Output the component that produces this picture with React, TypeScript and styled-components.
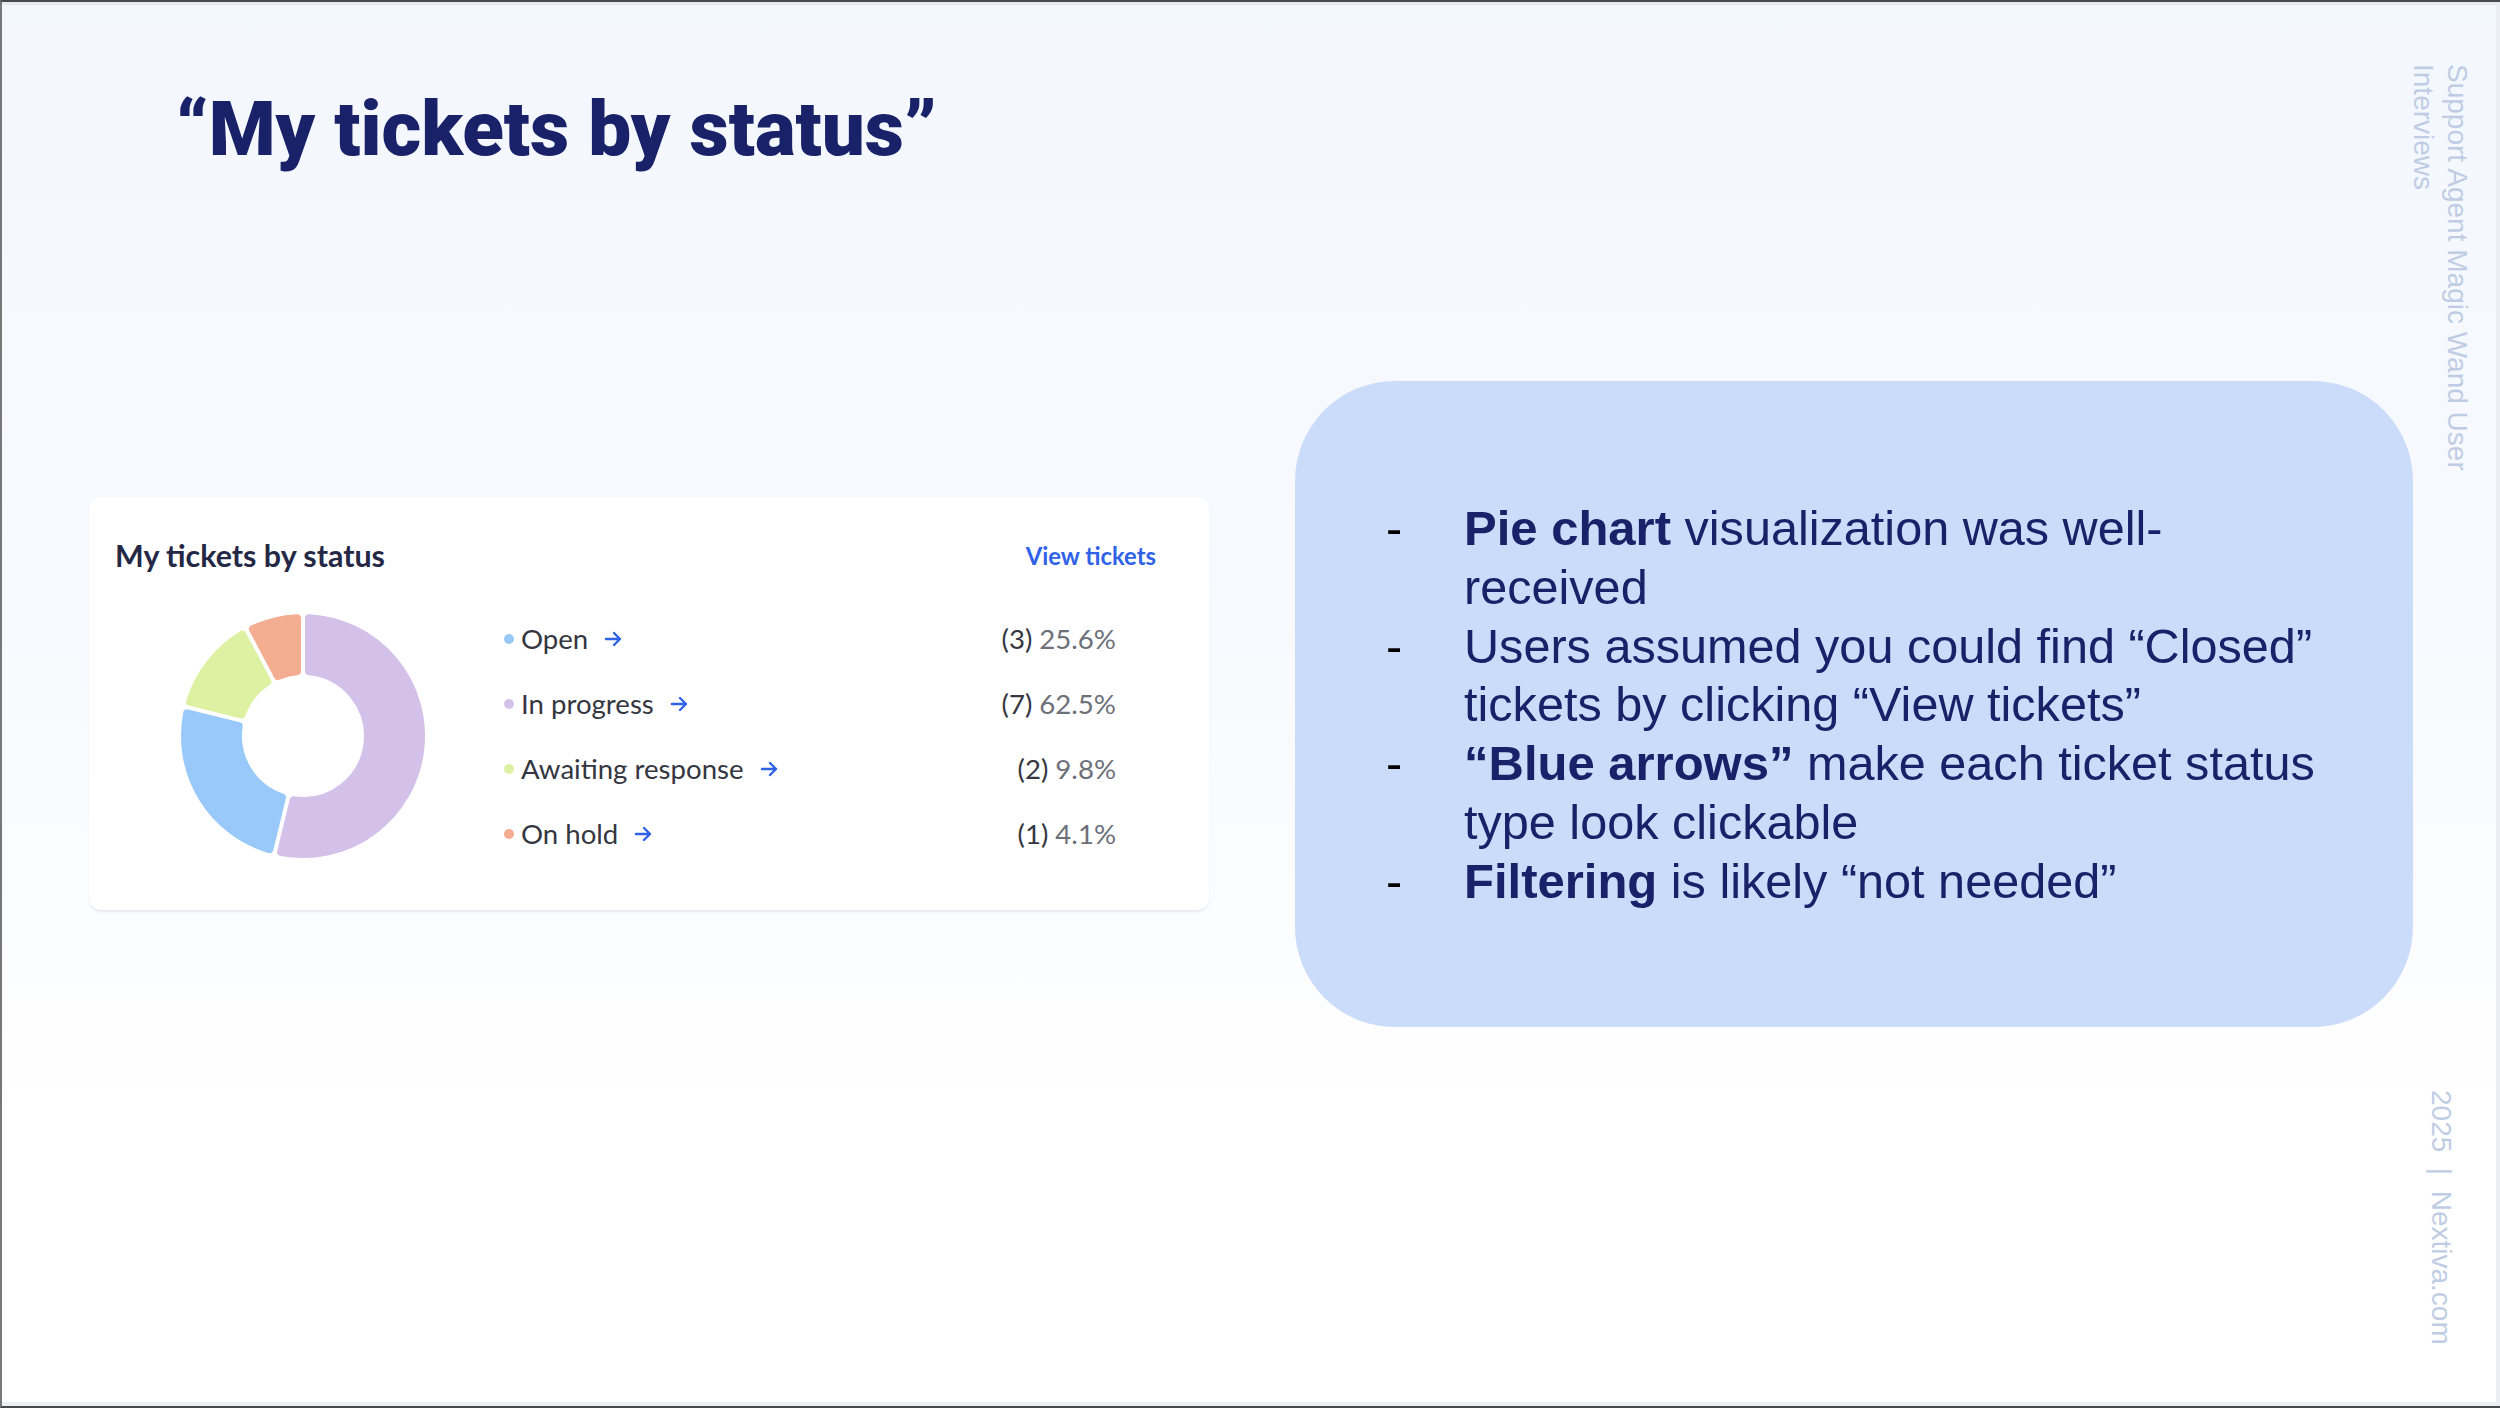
import React from "react";
import styled, { createGlobalStyle } from "styled-components";

const GlobalStyle = createGlobalStyle`
  html, body { margin: 0; padding: 0; background: #fff; }
`;

const Slide = styled.div`
  box-sizing: border-box;
  width: 2500px;
  height: 1408px;
  display: flex;
  overflow: hidden;
  background: linear-gradient(180deg, #f3f7fe 0%, #f9fafe 50%, #ffffff 80%);
  border-top: 2px solid #4a4a4c;
  border-left: 2px solid #77777a;
  border-bottom: 2px solid #4a4a4c;
  box-shadow: inset 0 3px 0 #e8ebf2, inset -4px 0 0 #eceef3, inset 0 -4px 0 #eceef3;
`;

const Main = styled.main`
  flex: 1;
  min-width: 0;
  display: flex;
  flex-direction: column;
`;

const Title = styled.h1`
  margin: 79px 0 0 174px;
  font: 900 76.4px/96px Roboto, sans-serif;
  color: #192168;
`;

const Columns = styled.div`
  display: flex;
  align-items: flex-start;
  gap: 86px;
  margin: 204px 0 0 87px;
`;

const Card = styled.section`
  flex: none;
  box-sizing: border-box;
  width: 1120px;
  height: 413px;
  margin-top: 116px;
  padding: 40px 53px 0 26px;
  background: #fff;
  border-radius: 12px;
  box-shadow: 0 2px 2px #e9ebf1;
  font-family: Lato, sans-serif;
`;

const CardHead = styled.div`
  display: flex;
  justify-content: space-between;
  align-items: center;
  height: 36px;
`;

const CardTitle = styled.h2`
  margin: 0;
  font-size: 30.4px;
  font-weight: 700;
  color: #242845;
`;

const ViewLink = styled.a`
  padding-top: 2px;
  font-size: 23.8px;
  font-weight: 700;
  color: #2f62e6;
`;

const CardBody = styled.div`
  display: flex;
  align-items: center;
  margin-top: 33px;
`;

const Donut = styled.svg`
  flex: none;
  width: 260px;
  height: 260px;
  margin-left: 58px;
`;

const Legend = styled.ul`
  flex: 1;
  margin: 0 0 0 71px;
  padding: 0 40px 0 0;
  list-style: none;
`;

const LegendRow = styled.li`
  display: flex;
  align-items: center;
  justify-content: space-between;
  height: 65.1px;
  font-size: 27.6px;
  color: #34373f;
`;

const LegendLabel = styled.span`
  display: flex;
  align-items: center;
`;

const Dot = styled.i<{ $color: string }>`
  width: 10px;
  height: 10px;
  margin-right: 7px;
  border-radius: 50%;
  background: ${(p) => p.$color};
`;

const Arrow = styled.svg`
  width: 20px;
  height: 20px;
  margin-left: 15px;
  fill: none;
  stroke: #2f62e6;
  stroke-width: 2.4;
  stroke-linecap: round;
  stroke-linejoin: round;
`;

const Percent = styled.span`
  color: #6d7079;
`;

const Panel = styled.section`
  flex: none;
  box-sizing: border-box;
  width: 1118px;
  height: 646px;
  padding: 118px 84px 0 91px;
  background: #cbdcfa;
  border-radius: 100px;
  font: 400 48.6px/58.8px "Liberation Sans", Arial, sans-serif;
  color: #192168;
  b {
    font-size: 49px;
  }
`;

const Notes = styled.ul`
  margin: 0;
  padding: 0;
  list-style: none;
`;

const Note = styled.li`
  position: relative;
  padding-left: 78px;
  &::before {
    content: "-";
    position: absolute;
    left: 0;
    color: #000;
  }
`;

const Rail = styled.aside`
  flex: none;
  width: 85px;
  display: flex;
  flex-direction: column;
  justify-content: space-between;
  padding: 62px 0 61px;
  box-sizing: border-box;
  font: 400 28px/34px "Liberation Sans", Arial, sans-serif;
  color: #bfcde4;
`;

const RailTop = styled.div`
  writing-mode: vertical-rl;
  align-self: flex-start;
  height: 412px;
  margin-left: -9px;
`;

const RailBottom = styled.div`
  writing-mode: vertical-rl;
  align-self: flex-start;
  white-space: pre;
  margin-left: 9px;
`;

// clockwise degrees from twelve o'clock, taken from the reference picture
const segments = [
  { from: 0, to: 193.6, color: "#d3c1ea" },
  { from: 193.6, to: 284, color: "#99c9fa" },
  { from: 284, to: 332, color: "#dcf1a2" },
  { from: 332, to: 360, color: "#f4ad90" },
];

const legend = [
  { label: "Open", count: "(3)", pct: "25.6%", color: "#99c9fa" },
  { label: "In progress", count: "(7)", pct: "62.5%", color: "#d3c1ea" },
  { label: "Awaiting response", count: "(2)", pct: "9.8%", color: "#dcf1a2" },
  { label: "On hold", count: "(1)", pct: "4.1%", color: "#f4ad90" },
];

const CORNER = 4;
const GAP = 2;

// ring slice drawn inset by CORNER; a round-joined stroke of 2*CORNER brings it back out with soft corners
const slicePath = (from: number, to: number) => {
  const cx = 130;
  const cy = 130;
  const outer = 122 - CORNER;
  const inner = 61 + CORNER;
  const d = CORNER + GAP;
  const pt = (r: number, deg: number) => {
    const a = (deg * Math.PI) / 180;
    return `${(cx + r * Math.sin(a)).toFixed(2)} ${(cy - r * Math.cos(a)).toFixed(2)}`;
  };
  const off = (r: number) => (Math.asin(d / r) * 180) / Math.PI;
  const large = to - from - off(outer) * 2 > 180 ? 1 : 0;
  return [
    `M${pt(outer, from + off(outer))}`,
    `A${outer} ${outer} 0 ${large} 1 ${pt(outer, to - off(outer))}`,
    `L${pt(inner, to - off(inner))}`,
    `A${inner} ${inner} 0 ${large} 0 ${pt(inner, from + off(inner))}`,
    "Z",
  ].join(" ");
};

export default function App() {
  return (
    <>
      <GlobalStyle />
      <Slide>
        <Main>
          <Title>“My tickets by status”</Title>
          <Columns>
            <Card>
              <CardHead>
                <CardTitle>My tickets by status</CardTitle>
                <ViewLink>View tickets</ViewLink>
              </CardHead>
              <CardBody>
                <Donut viewBox="0 0 260 260">
                  {segments.map((s) => (
                    <path
                      key={s.color}
                      d={slicePath(s.from, s.to)}
                      fill={s.color}
                      stroke={s.color}
                      strokeWidth={CORNER * 2}
                      strokeLinejoin="round"
                    />
                  ))}
                </Donut>
                <Legend>
                  {legend.map((row) => (
                    <LegendRow key={row.label}>
                      <LegendLabel>
                        <Dot $color={row.color} />
                        {row.label}
                        <Arrow viewBox="0 0 20 20">
                          <path d="M3 10h14M11 4l6 6-6 6" />
                        </Arrow>
                      </LegendLabel>
                      <span>
                        {row.count} <Percent>{row.pct}</Percent>
                      </span>
                    </LegendRow>
                  ))}
                </Legend>
              </CardBody>
            </Card>
            <Panel>
              <Notes>
                <Note>
                  <b>Pie chart</b> visualization was well-received
                </Note>
                <Note>Users assumed you could find “Closed” tickets by clicking “View tickets”</Note>
                <Note>
                  <b>“Blue arrows”</b> make each ticket status type look clickable
                </Note>
                <Note>
                  <b>Filtering</b> is likely “not needed”
                </Note>
              </Notes>
            </Panel>
          </Columns>
        </Main>
        <Rail>
          <RailTop>Support Agent Magic Wand User Interviews</RailTop>
          <RailBottom>2025  |  Nextiva.com</RailBottom>
        </Rail>
      </Slide>
    </>
  );
}
